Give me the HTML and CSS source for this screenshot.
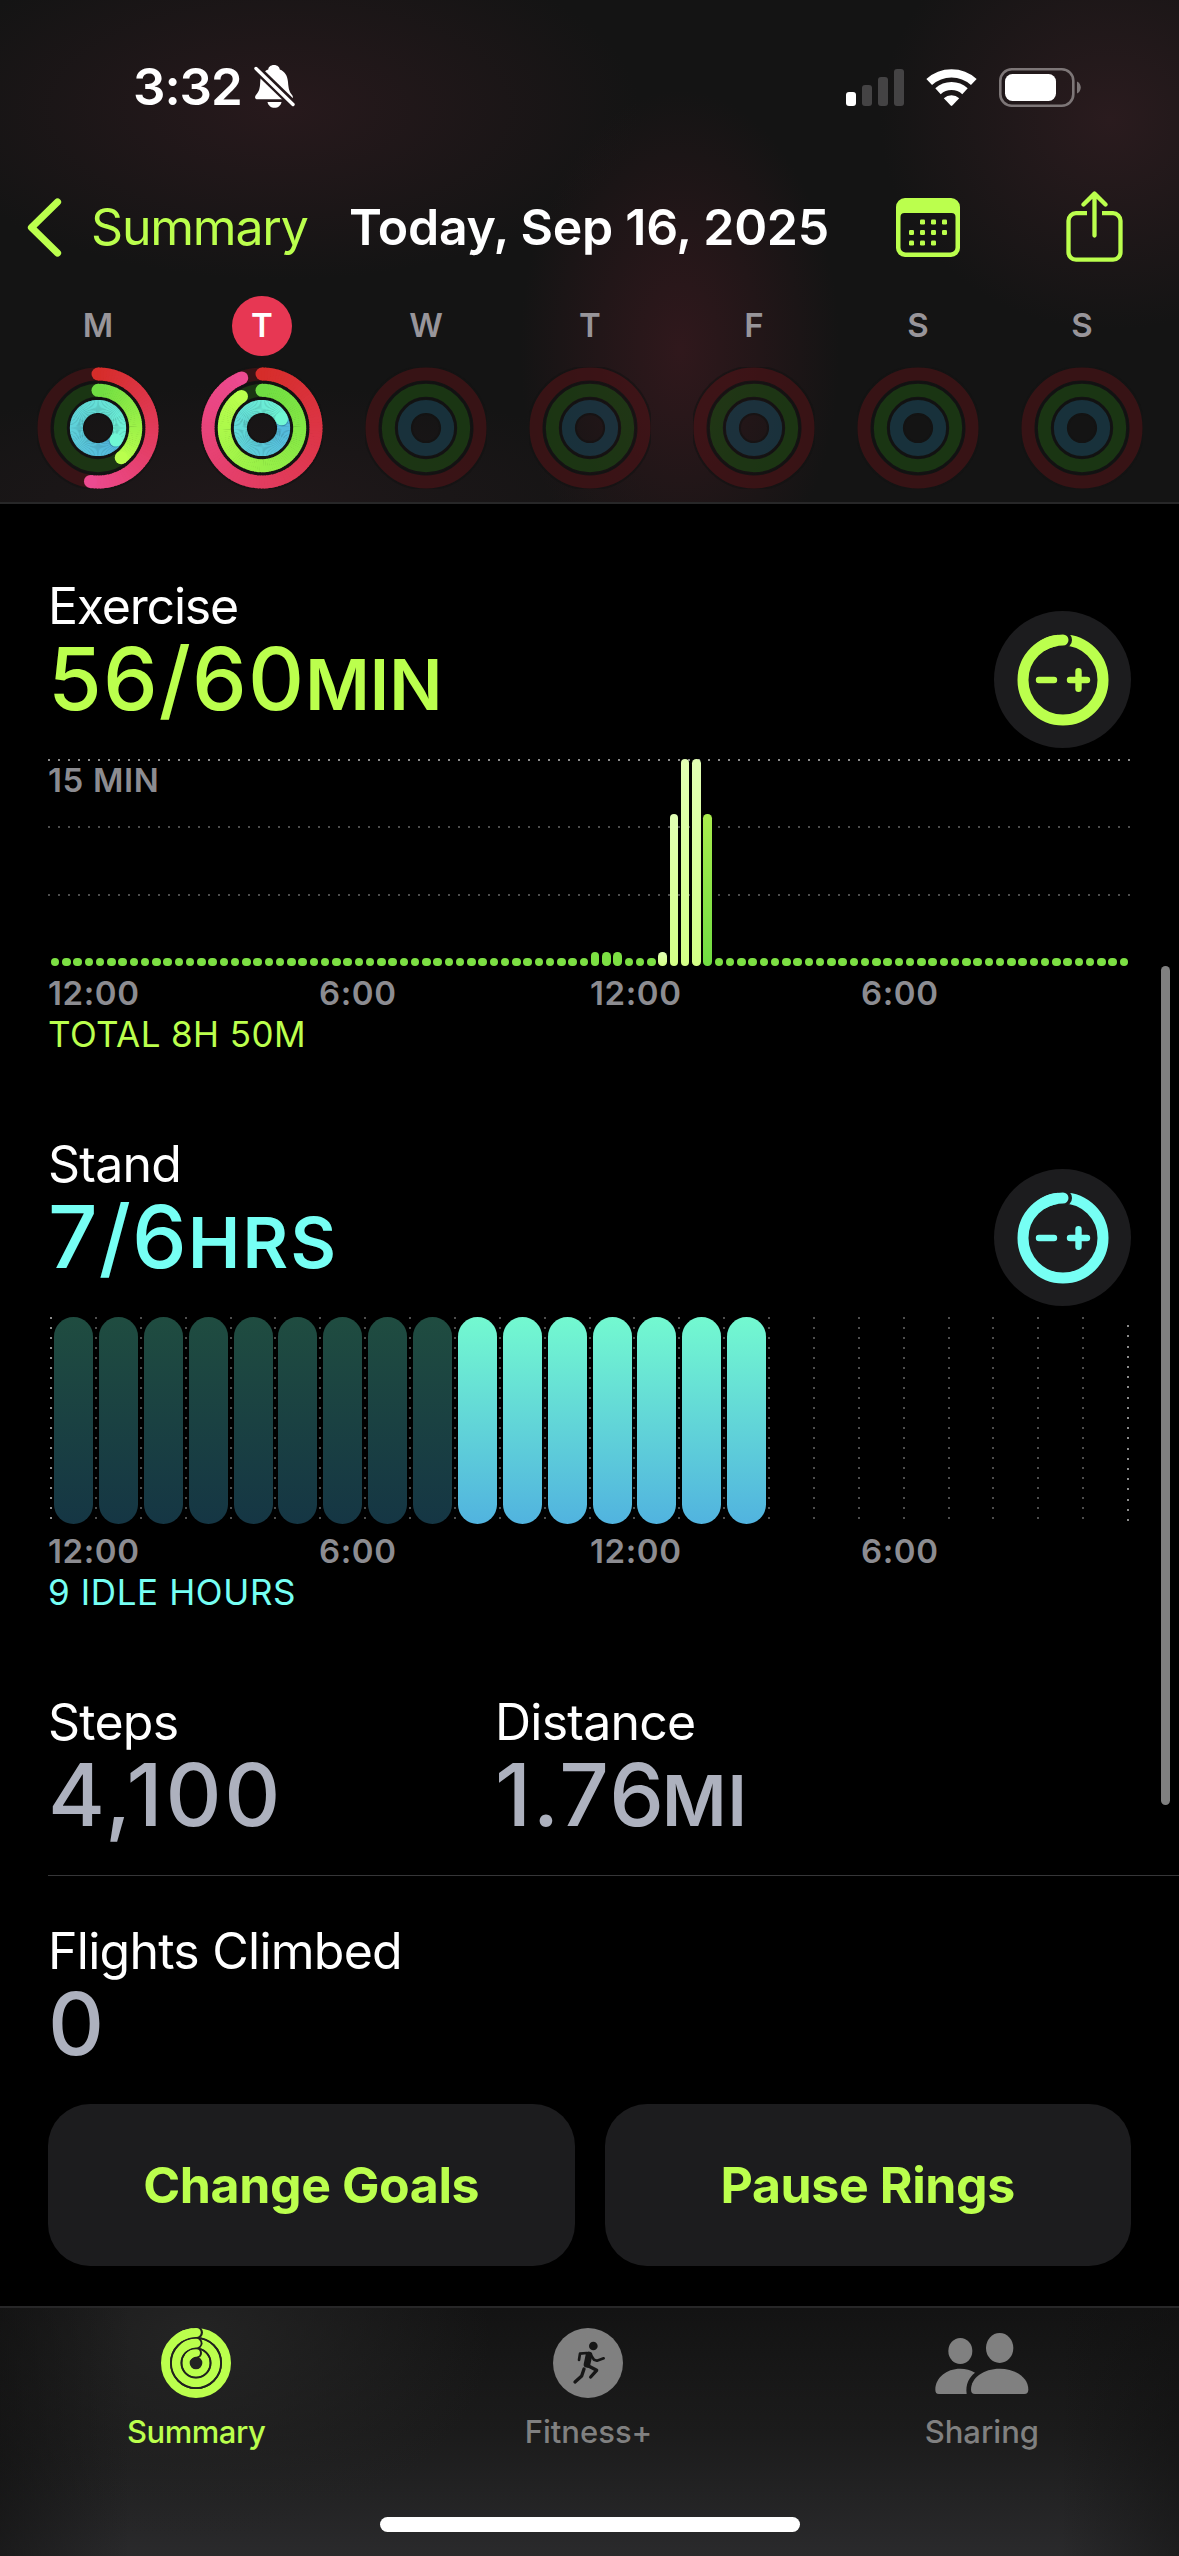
FILE: index.html
```html
<!DOCTYPE html>
<html lang="en">
<head>
<meta charset="utf-8">
<title>Activity Summary</title>
<link rel="stylesheet" href="styles.css">
</head>
<body>
<div class="screen">
  <header class="header">
    <div class="status">
      <span class="time">3:32</span>
      <svg class="bell" width="41" height="44" viewBox="0 0 41 44">
        <mask id="bell-cut"><rect width="41" height="44" fill="#fff"/><path d="M-2 -.5L42 42" stroke="#000" stroke-width="8.5"/></mask>
        <g fill="#fff" mask="url(#bell-cut)">
          <path d="M20 0c3.600 0 5.500 2.200 5.800 4.600C31 6.500 33.500 11 34 17c.5 7 1.500 10 4 13 1.800 2.300.8 4.300-1.500 4.300h-33C1.200 34.300.2 32.300 2 30c2.800-3.200 4-6 4.200-13C6.500 11 9 6.500 14.200 4.600 14.500 2.200 16.400 0 20 0z"/>
        </g>
        <path d="M13.500 37h14c-.6 3.500-3.500 5.800-7 5.800s-6.400-2.300-7-5.800z" fill="#fff"/>
        <path d="M2 3.500L39 39.500" stroke="#fff" stroke-width="3.400" stroke-linecap="round"/>
      </svg>
      <div class="indicators">
        <svg width="58" height="37" viewBox="0 0 58 37">
          <rect x="0" y="23" width="10" height="14" rx="3" fill="#fff"/>
          <g fill="#444344"><rect x="16" y="16" width="10" height="21" rx="3"/><rect x="32" y="8" width="10" height="29" rx="3"/><rect x="48" y="0" width="10" height="37" rx="3"/></g>
        </svg>
        <svg width="51" height="37" viewBox="0 0 51 37">
          <g fill="none" stroke="#fff"><path d="M3.200 13A33 33 0 0 1 47.800 13" stroke-width="8.400"/><path d="M12 22.200A20 20 0 0 1 39 22.200" stroke-width="8"/></g>
          <path d="M17.800 29.300a11.200 11.200 0 0 1 15.400 0L26.300 36.600q-.8.800-1.600 0z" fill="#fff"/>
        </svg>
        <svg width="82" height="39" viewBox="0 0 82 39">
          <rect x="1.300" y="1.300" width="73" height="36.400" rx="11.500" fill="none" stroke="#7d7677" stroke-width="2.600"/>
          <rect x="6" y="6" width="51" height="27" rx="7.500" fill="#fff"/>
          <path d="M78 13.500c5 2 5 10 0 12z" fill="#7d7677"/>
        </svg>
      </div>
    </div>
    <nav class="nav">
      <svg class="chevron" width="40" height="60" viewBox="0 0 40 60"><path d="M33.500 5L7.500 30.500 33.500 56" fill="none" stroke="#bbff4d" stroke-width="7.200" stroke-linecap="round" stroke-linejoin="round"/></svg>
      <a class="back">Summary</a>
      <h1 class="title">Today, Sep 16, 2025</h1>
      <svg class="calendar" width="64" height="59" viewBox="0 0 64 59">
        <path fill-rule="evenodd" fill="#bbff4d" d="M9 0h46a9 9 0 0 1 9 9v41a9 9 0 0 1-9 9H9a9 9 0 0 1-9-9V9a9 9 0 0 1 9-9zM8.500 15a4 4 0 0 0-4 4v30.500a5 5 0 0 0 5 5h45a5 5 0 0 0 5-5V19a4 4 0 0 0-4-4z"/>
        <g fill="#bbff4d"><rect x="24" y="21.500" width="5" height="5" rx="1.300"/><rect x="35" y="21.500" width="5" height="5" rx="1.300"/><rect x="46" y="21.500" width="5" height="5" rx="1.300"/><rect x="13" y="32" width="5" height="5" rx="1.300"/><rect x="24" y="32" width="5" height="5" rx="1.300"/><rect x="35" y="32" width="5" height="5" rx="1.300"/><rect x="46" y="32" width="5" height="5" rx="1.300"/><rect x="13" y="42.500" width="5" height="5" rx="1.300"/><rect x="24" y="42.500" width="5" height="5" rx="1.300"/><rect x="35" y="42.500" width="5" height="5" rx="1.300"/></g>
      </svg>
      <svg class="share" width="57" height="72" viewBox="0 0 57 72"><g fill="none" stroke="#bbff4d" stroke-width="4.300"><path d="M21 22.200H10a7.500 7.500 0 0 0-7.500 7.500v31.500a7.500 7.500 0 0 0 7.500 7.500h37a7.500 7.500 0 0 0 7.500-7.500V29.700a7.500 7.500 0 0 0-7.500-7.500H36"/><path d="M28.500 44.500V3M17.500 13.500L28.500 2.600 39.500 13.500" stroke-linecap="round" stroke-linejoin="round"/></g></svg>
    </nav>
    <div class="week" id="week"></div>
  </header>

  <main class="content">
    <section class="metric exercise">
      <div class="metric-head">
        <div>
          <h2 class="label label-exercise">Exercise</h2>
          <p class="value">56/60<span class="unit">MIN</span></p>
        </div>
        <button class="adjust" aria-label="Adjust exercise goal">
          <svg width="92" height="92" viewBox="-46 -46 92 92"><use href="#adjust-icon"/></svg>
        </button>
      </div>
      <div class="chart chart-minutes"><span class="scale">15 MIN</span><div class="minutes" id="minutes"></div></div>
      <div class="axis"><span>12:00</span><span>6:00</span><span>12:00</span><span>6:00</span></div>
      <p class="total">TOTAL 8H 50M</p>
    </section>

    <section class="metric stand">
      <div class="metric-head">
        <div>
          <h2 class="label">Stand</h2>
          <p class="value">7/6<span class="unit unit-hrs">HRS</span></p>
        </div>
        <button class="adjust" aria-label="Adjust stand goal">
          <svg width="92" height="92" viewBox="-46 -46 92 92"><use href="#adjust-icon"/></svg>
        </button>
      </div>
      <div class="chart chart-hours" id="hours"></div>
      <div class="axis"><span>12:00</span><span>6:00</span><span>12:00</span><span>6:00</span></div>
      <p class="total total-idle">9 IDLE HOURS</p>
    </section>

    <section class="stats">
      <div><h2 class="label">Steps</h2><p class="value value-steps">4,100</p></div>
      <div><h2 class="label">Distance</h2><p class="value value-distance">1.76<span class="unit unit-mi">MI</span></p></div>
    </section>
    <section class="flights"><h2 class="label">Flights Climbed</h2><p class="value">0</p></section>
    <div class="actions"><button class="action">Change Goals</button><button class="action">Pause Rings</button></div>
    <div class="scrollbar"></div>
  </main>

  <footer class="tabs">
    <div class="tab active">
      <svg width="72" height="72" viewBox="-108 -108 216 216">
        <g fill="none" stroke="currentColor"><circle r="91.500" stroke-width="27"/><circle r="59.500" stroke-width="26"/><circle r="30" stroke-width="22"/></g>
        <g fill="#20211f"><circle cx="3" cy="-91.500" r="18"/><circle cx="2" cy="-59.500" r="17.500"/><circle cx="2" cy="-30" r="16"/></g>
        <g fill="none" stroke="#20211f" stroke-width="5"><circle r="75.500"/><circle r="43.500"/></g>
        <g fill="none" stroke="currentColor" stroke-linecap="round"><path d="M-45 -79.700A91.500 91.500 0 0 1 1 -91.500" stroke-width="27"/><path d="M-35 -48.100A59.500 59.500 0 0 1 1 -59.500" stroke-width="26"/><path d="M-22 -20.400A30 30 0 0 1 1 -30" stroke-width="22"/></g>
      </svg>
      <span class="tab-summary">Summary</span>
    </div>
    <div class="tab">
      <svg width="72" height="72" viewBox="-108 -108 216 216">
        <circle r="105" fill="currentColor"/>
        <g fill="none" stroke="#171717" stroke-linecap="round" stroke-linejoin="round">
          <circle cx="16" cy="-51" r="13" fill="#171717" stroke="none"/>
          <path d="M-27 -9L-24 -28 -4 -30 8 -25 18 -10 27 -7 47 -14" stroke-width="8"/>
          <path d="M3 -24L-3 4" stroke-width="20"/>
          <path d="M0 8L26 22 8 42" stroke-width="10"/>
          <path d="M-12 18L-19 39 -39 57" stroke-width="10"/>
        </g>
      </svg>
      <span>Fitness+</span>
    </div>
    <div class="tab">
      <svg width="120" height="72" viewBox="2 18 360 216">
        <g fill="currentColor"><ellipse cx="120" cy="90" rx="36" ry="39"/><ellipse cx="238" cy="81" rx="41" ry="45"/><path d="M45 206c0-36 34-63 74-63 18 0 32 4 45 12-18 14-29 35-25 64H56c-8 0-11-5-11-13z"/><path d="M152 206c0-36 38-63 86-63s86 27 86 63c0 8-4 13-12 13H164c-8 0-12-5-12-13z"/></g>
      </svg>
      <span class="tab-sharing">Sharing</span>
    </div>
    <div class="home"></div>
  </footer>
</div>

<svg class="defs" width="0" height="0">
  <defs>
    <g id="adjust-icon">
      <circle r="40" fill="none" stroke="currentColor" stroke-width="11"/>
      <circle cx="1" cy="-40" r="8" fill="#1c1c1e"/>
      <path d="M-20 -34.600A40 40 0 0 1 0 -40" fill="none" stroke="currentColor" stroke-width="11" stroke-linecap="round"/>
      <path d="M-24 0H-9M7 0H24M15.500 -8.800V8.800" fill="none" stroke="currentColor" stroke-width="6.400" stroke-linecap="round"/>
    </g>
  </defs>
</svg>
<script src="script.js"></script>
</body>
</html>
```
FILE: styles.css
```css
* { box-sizing: border-box; }

body {
  margin: 0;
  background: #000;
  color: #fff;
  font-family: Inter, "Liberation Sans", sans-serif;
}

h1, h2, p { margin: 0; font-weight: 400; }
button { border: 0; padding: 0; font: inherit; }
svg { display: block; flex: none; }
.defs { position: absolute; }

.screen {
  width: 1179px;
  height: 2556px;
  display: flex;
  flex-direction: column;
  overflow: hidden;
}

/* Header */
.header {
  height: 504px;
  padding-top: 57px;
  border-bottom: 2px solid #272728;
  background:
    radial-gradient(ellipse 360px 170px at 280px 110px, #27191c, transparent),
    radial-gradient(ellipse 230px 210px at 1110px 120px, #2a1b1e, transparent),
    radial-gradient(ellipse 160px 260px at 680px 350px, #30181c, transparent),
    radial-gradient(ellipse 400px 120px at 250px 504px, #20181a, transparent),
    #141414;
}

.status {
  height: 60px;
  padding: 0 98px 0 133px;
  display: flex;
  align-items: center;
}
.time { width: 121px; font-size: 51px; line-height: 60px; font-weight: 600; letter-spacing: -1.05px; }
.indicators { margin-left: auto; display: flex; align-items: center; gap: 22px; }

.nav {
  height: 60px;
  margin-top: 80px;
  display: grid;
  grid-template-rows: 60px;
  grid-template-columns: 91px 258px 547px 170px 1fr;
  align-items: center;
  line-height: 60px;
  font-size: 50px;
  white-space: nowrap;
}
.chevron { margin-left: 24px; }
.back { color: #bbff4d; letter-spacing: -1.2px; }
.title { font-size: 50px; font-weight: 600; letter-spacing: -0.28px; }

.week {
  width: 1148px;
  margin: 39px 0 0 16px;
  display: grid;
  grid-template-columns: repeat(7, 1fr);
}
.day { display: flex; flex-direction: column; align-items: center; gap: 11px; }
.day-name {
  width: 60px;
  height: 60px;
  border-radius: 50%;
  line-height: 59px;
  text-align: center;
  font-size: 33px;
  font-weight: 600;
  color: #98959a;
}
.day-name.today { background: #e73753; color: #fff; }

/* Metrics */
.content { position: relative; height: 1802px; padding-top: 72px; }
.exercise { color: #bbff4d; }
.stand { color: #76fff4; margin-top: 82px; }

.metric-head {
  height: 183px;
  padding: 0 48px;
  display: flex;
  justify-content: space-between;
}
.label { color: #fff; font-size: 50px; line-height: 60px; letter-spacing: -0.75px; }
.label-exercise { letter-spacing: -1.2px; }
.value {
  font-size: 87px;
  line-height: 86px;
  height: 86px;
  font-weight: 500;
  letter-spacing: 1.1px;
  white-space: nowrap;
}
.unit { font-size: 70px; font-weight: 600; letter-spacing: 0; }
.unit-hrs { letter-spacing: 2.3px; }
.unit-mi { letter-spacing: 1px; margin-left: -4px; }

.adjust {
  width: 137px;
  height: 137px;
  margin-top: 35px;
  border-radius: 50%;
  background: #1c1c1e;
  color: inherit;
  display: grid;
  place-items: center;
}

.chart { height: 207px; }
.chart-minutes {
  margin-left: 48px;
  width: 1083px;
  position: relative;
  background:
    linear-gradient(90deg, #8c8c8c 2px, transparent 2px) 0 0 / 10px 2px repeat-x,
    linear-gradient(90deg, #4e4e4e 2px, transparent 2px) 0 67px / 10px 2px repeat-x,
    linear-gradient(90deg, #4e4e4e 2px, transparent 2px) 0 135px / 10px 2px repeat-x;
}
.scale {
  position: absolute;
  left: 0;
  top: 3px;
  font-size: 33px;
  line-height: 36px;
  font-weight: 600;
  letter-spacing: 0.65px;
  color: #8c8c91;
}
.minutes { width: 1080px; height: 207px; margin-left: 1.5px; display: grid; grid-template-columns: repeat(96, 1fr); align-items: end; justify-items: center; }
.minute { width: 8.5px; border-radius: 4.25px; background: #7ce043; }
.minute.peak { background: linear-gradient(#a9ec4d, #70dc42); }
.minute.workout { background: linear-gradient(#e2ffb4, #d3ff86); }

.chart-hours {
  margin-left: 50px;
  width: 1079px;
  display: grid;
  grid-template-columns: repeat(24, 1fr);
  border-right: 2px solid;
  border-image: repeating-linear-gradient(#8a8a8a 0 2px, transparent 2px 10px) 2;
}
.hour {
  padding-left: 4px;
  background: linear-gradient(#4e4e4e 2px, transparent 2px) 0 0 / 2px 10px repeat-y;
}
.hour:first-child { background-image: linear-gradient(#8a8a8a 2px, transparent 2px); }
.hour i { display: block; width: 39px; height: 207px; border-radius: 19.5px; }
.hour .idle { background: linear-gradient(#1f4c40, #153644); }
.hour .stood { background: linear-gradient(#73f9d0, #51b3df); }

.axis {
  margin: 9px 0 0 48px;
  display: grid;
  grid-template-columns: 271px 271px 271px 1fr;
  font-size: 33px;
  line-height: 36px;
  font-weight: 600;
  letter-spacing: 0.6px;
  color: #8c8c91;
}
.total { margin: 5px 0 0 48px; font-size: 35px; line-height: 36px; letter-spacing: 0.4px; }
.total-idle { letter-spacing: 0.62px; }

/* Plain statistics */
.stats {
  margin: 82px 0 0 48px;
  height: 184px;
  display: grid;
  grid-template-columns: 447px 1fr;
  border-bottom: 1px solid #363638;
}
.stats .value, .flights .value { color: #adb1be; }
.value-steps { letter-spacing: 2.8px; }
.value-distance { letter-spacing: 1.7px; }
.flights { margin: 45px 0 0 48px; }

.actions {
  margin: 37px 48px 0;
  display: grid;
  grid-template-columns: 1fr 1fr;
  gap: 30px;
}
.action {
  height: 162px;
  border-radius: 42px;
  background: #1c1c1e;
  color: #bbff4d;
  font-size: 50px;
  font-weight: 700;
  letter-spacing: -0.4px;
}

.scrollbar {
  position: absolute;
  right: 9px;
  top: 462px;
  width: 9px;
  height: 839px;
  border-radius: 5px;
  background: #808080;
}

/* Tab bar */
.tabs {
  position: relative;
  height: 250px;
  padding: 19px 2px 0 0;
  display: grid;
  grid-template-columns: repeat(3, 1fr);
  border-top: 2px solid #272728;
  background:
    linear-gradient(90deg, rgba(16, 16, 16, 0.6), transparent 130px, transparent 1060px, rgba(16, 16, 16, 0.5)),
    radial-gradient(ellipse 300px 200px at 190px 30px, #242424, transparent),
    linear-gradient(#131313, #1b1b1b 50%, #2a2a2c);
}
.tab {
  display: flex;
  flex-direction: column;
  align-items: center;
  gap: 14px;
  color: #808080;
  font-size: 31px;
  line-height: 37px;
  font-weight: 500;
}
.tab.active { color: #bbff4d; }
.tab-summary { letter-spacing: -0.45px; }
.tab-sharing { padding-left: 2px; }
.home {
  position: absolute;
  left: 380px;
  bottom: 24px;
  width: 420px;
  height: 15px;
  border-radius: 8px;
  background: #fff;
}
```
FILE: script.js
```js
const rings = {
  move: { r: 54, track: "rgba(214,20,30,0.19)", from: [214, 45, 42], to: [237, 74, 144] },
  exercise: { r: 37.7, track: "rgba(60,200,20,0.19)", from: [112, 222, 66], to: [186, 255, 77] },
  stand: { r: 21.6, track: "rgba(40,140,180,0.25)", from: [82, 182, 222], to: [112, 247, 212] }
};

const days = [
  { name: "M", move: 188, exercise: 142, stand: 484 },
  { name: "T", today: true, move: 338, exercise: 327, stand: 425 },
  { name: "W" }, { name: "T" }, { name: "F" }, { name: "S" }, { name: "S" }
];

const point = (r, deg) => {
  const a = (deg - 90) * Math.PI / 180;
  return `${(r * Math.cos(a)).toFixed(2)} ${(r * Math.sin(a)).toFixed(2)}`;
};

function dot(r, deg, color) {
  const [x, y] = point(r, deg).split(" ");
  return `<circle cx="${x}" cy="${y}" r="6.5" fill="${color}" stroke="none"/>`;
}

// A ring is a run of short arcs, so that its colour follows the angle.
function arc(ring, end) {
  const start = Math.max(0, end - 360);
  const mix = t => `rgb(${ring.from.map((c, i) => Math.round(c + (ring.to[i] - c) * t)).join(",")})`;
  let out = start ? "" : dot(ring.r, 0, mix(0));
  for (let a = start; a < end; a += 3) {
    const over = Math.min(a + 3.8, end);
    out += `<path d="M${point(ring.r, a)}A${ring.r} ${ring.r} 0 0 1 ${point(ring.r, over)}" stroke="${mix((a - start) / (end - start))}"/>`;
  }
  if (start) out += dot(ring.r, end + 3, "rgba(0,60,80,0.25)");
  return out + dot(ring.r, end, mix(1));
}

document.getElementById("week").innerHTML = days.map(day => {
  let svg = "";
  for (const key of ["move", "exercise", "stand"]) {
    const ring = rings[key];
    svg += `<circle r="${ring.r}" stroke="#131212" stroke-width="17" opacity="0.6"/>`;
    svg += `<circle r="${ring.r}" stroke="${ring.track}"/>`;
  }
  for (const key of ["move", "exercise", "stand"]) {
    if (day[key]) svg += arc(rings[key], day[key]);
  }
  return `<div class="day"><span class="day-name${day.today ? " today" : ""}">${day.name}</span>` +
    `<svg width="122" height="122" viewBox="-61 -61 122 122" fill="none" stroke-width="13">${svg}</svg></div>`;
}).join("");

// Exercise: one column for each quarter of an hour.
const active = { 48: 14, 49: 14, 50: 14, 54: 14, 55: 152, 56: 207, 57: 207, 58: 152 };
document.getElementById("minutes").innerHTML = Array.from({ length: 96 }, (_, i) => {
  const kind = i >= 54 && i <= 57 ? " workout" : i === 58 ? " peak" : "";
  return `<i class="minute${kind}" style="height:${active[i] || 8.5}px"></i>`;
}).join("");

// Stand: one column for each hour.
document.getElementById("hours").innerHTML = Array.from({ length: 24 }, (_, i) =>
  `<div class="hour">${i < 9 ? '<i class="idle"></i>' : i < 16 ? '<i class="stood"></i>' : ""}</div>`
).join("");
```
